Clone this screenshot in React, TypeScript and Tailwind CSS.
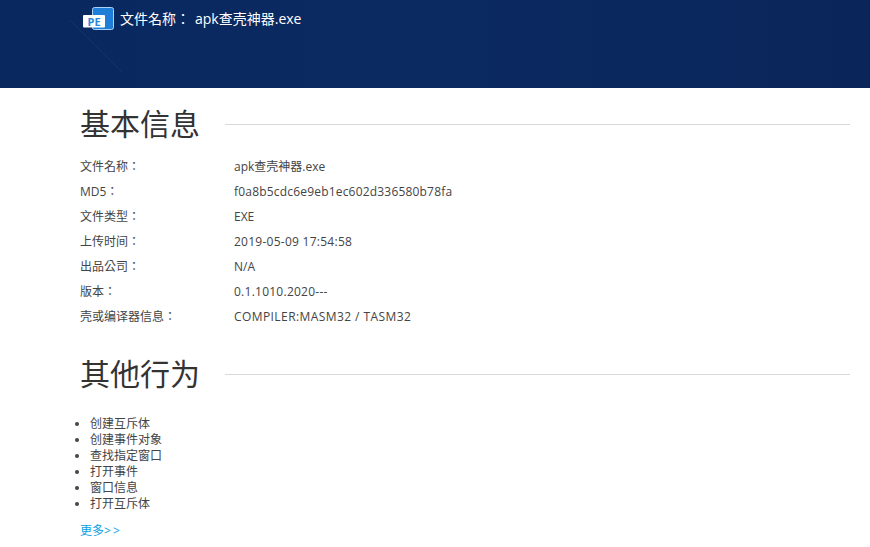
const font = "font-['Open_Sans','Noto_Sans_CJK_TC',sans-serif]";

const baseInfo = [
  ["文件名称：", "apk查壳神器.exe", ""],
  ["MD5：", "f0a8b5cdc6e9eb1ec602d336580b78fa", "tracking-[0.19px]"],
  ["文件类型：", "EXE", ""],
  ["上传时间：", "2019-05-09 17:54:58", "tracking-[0.26px]"],
  ["出品公司：", "N/A", ""],
  ["版本：", "0.1.1010.2020---", "tracking-[0.25px]"],
  ["壳或编译器信息：", "COMPILER:MASM32 / TASM32", "tracking-[0.42px]"],
];

const behaviors = ["创建互斥体", "创建事件对象", "查找指定窗口", "打开事件", "窗口信息", "打开互斥体"];

function PeLogo() {
  return (
    <svg width="32" height="24" viewBox="0 0 32 24" className="shrink-0">
      <rect x="9.5" y="0.5" width="21" height="22" rx="2" fill="#1f7fd8" stroke="#a9d2f5" />
      <rect x="0" y="8" width="22" height="12.5" rx="1" fill="#ffffff" />
      <text x="4.5" y="18.5" fontSize="11" fontWeight="700" fill="#2b86dc" fontFamily="Open Sans, sans-serif">PE</text>
    </svg>
  );
}

function SectionTitle({ title }: { title: string }) {
  return (
    <div className="flex items-center pr-5">
      <h2 className="text-[30px] leading-[42px] font-normal text-[#333333] whitespace-nowrap">{title}</h2>
      <div className="ml-[25px] h-px flex-1 bg-[#d9d9d9]" />
    </div>
  );
}

export default function App() {
  return (
    <div className={`min-h-screen bg-white overflow-hidden ${font}`}>
      {/* top banner */}
      <header className="relative h-[88px] bg-gradient-to-r from-[#0a2860] via-[#0b2a62] to-[#0a2559] overflow-hidden">
        <svg className="absolute left-0 top-0" width="200" height="88">
          <line x1="70" y1="20" x2="122" y2="72" stroke="#11316b" strokeWidth="1" />
        </svg>
        <div className="relative flex items-center pl-[83px] pt-[7px]">
          <PeLogo />
          <span className="ml-[5px] text-sm leading-6 text-white whitespace-nowrap">
            文件名称：<span className="ml-[5px]">apk查壳神器.exe</span>
          </span>
        </div>
      </header>

      <main className="pl-20">
        <section className="pt-[15px]">
          <SectionTitle title="基本信息" />
          <div className="mt-[9px]">
            {baseInfo.map(([label, value, spacing]) => (
              <div key={label} className="flex h-[25px] items-center text-xs text-[#444444]">
                <div className="w-[154px] shrink-0">{label}</div>
                <div className={spacing}>{value}</div>
              </div>
            ))}
          </div>
        </section>

        <section className="mt-[24px]">
          <SectionTitle title="其他行为" />
          <ul className="mt-[21px] ml-[10px] list-disc text-xs leading-4 text-[#444444]">
            {behaviors.map((b, i) => (
              <li key={i}>{b}</li>
            ))}
          </ul>
          <a className="mt-[11px] block text-xs leading-4 text-[#0d9fe6]">
            更多<span className="tracking-[2px]">&gt;&gt;</span>
          </a>
        </section>
      </main>
    </div>
  );
}
